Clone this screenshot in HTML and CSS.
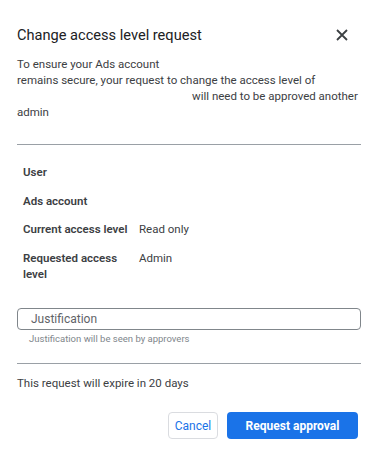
FILE: index.html
```html
<!DOCTYPE html>
<html>
<head>
<meta charset="utf-8">
<link rel="stylesheet" href="styles.css">
</head>
<body>
<div class="dialog">
  <div class="header">
    <h1 class="title">Change access level request</h1>
    <button class="close" aria-label="Close">
      <svg width="12" height="12" viewBox="0 0 12 12"><path d="M1 1L11 11M11 1L1 11" stroke="#3c4043" stroke-width="1.8" fill="none"/></svg>
    </button>
  </div>
  <p class="intro">To ensure your Ads account<br>remains secure, your request to change the access level of<br><span class="blank"></span>will need to be approved another<br>admin</p>
  <hr class="divider">
  <div class="details">
    <div class="row"><div class="label">User</div><div class="value"></div></div>
    <div class="row"><div class="label">Ads account</div><div class="value"></div></div>
    <div class="row"><div class="label">Current access level</div><div class="value">Read only</div></div>
    <div class="row"><div class="label">Requested access level</div><div class="value">Admin</div></div>
  </div>
  <div class="field">
    <div class="input">Justification</div>
    <div class="helper">Justification will be seen by approvers</div>
  </div>
  <hr class="divider divider-2">
  <p class="expire">This request will expire in 20 days</p>
  <div class="actions">
    <button class="btn btn-cancel">Cancel</button>
    <button class="btn btn-primary">Request approval</button>
  </div>
</div>
</body>
</html>
```
FILE: styles.css
```css
html, body {
  margin: 0;
  padding: 0;
  background: #fff;
}
.dialog {
  font-family: Roboto, "Liberation Sans", sans-serif;
  color: #3c4043;
  padding: 26px 17px 0 17px;
}
.header {
  display: flex;
  align-items: center;
  justify-content: space-between;
  height: 18px;
}
.title {
  margin: 0;
  font-size: 14.6px;
  font-weight: 400;
  color: #202124;
  line-height: 18px;
}
.close {
  border: 0;
  background: none;
  padding: 0;
  margin-right: 13px;
  width: 12px;
  height: 12px;
  display: flex;
}
.intro {
  margin: 12px 0 0 0;
  font-size: 11.5px;
  line-height: 16px;
  color: #3c4043;
}
.blank {
  display: inline-block;
  width: 175px;
}
.divider {
  border: 0;
  border-top: 1px solid #9aa0a6;
  margin: 24px 0 0 0;
}
.details {
  padding: 15px 6px 0 6px;
  font-size: 11.5px;
}
.row {
  display: flex;
  padding: 4px 0 8.5px 0;
  line-height: 16px;
}
.label {
  width: 116px;
  font-weight: 600;
  color: #3c4043;
}
.value {
  color: #3c4043;
}
.field {
  margin-top: 18px;
}
.input {
  height: 20px;
  border: 1px solid #80868b;
  border-radius: 4px;
  padding-left: 13px;
  font-size: 12px;
  line-height: 20px;
  color: #5f6368;
}
.helper {
  margin-top: 2px;
  padding-left: 12px;
  font-size: 9.5px;
  line-height: 13px;
  color: #80868b;
}
.divider-2 {
  margin-top: 18px;
}
.expire {
  margin: 11px 0 0 0;
  font-size: 11.5px;
  line-height: 16px;
}
.actions {
  display: flex;
  justify-content: flex-end;
  gap: 9px;
  margin-top: 21px;
  padding-right: 3px;
}
.btn {
  font-family: Roboto, "Liberation Sans", sans-serif;
  font-size: 12px;
  font-weight: 500;
  height: 27px;
  border-radius: 4px;
  padding: 0;
}
.btn-cancel {
  width: 50px;
  background: #fff;
  border: 1px solid #dadce0;
  color: #1a73e8;
  font-weight: 400;
}
.btn-primary {
  width: 131px;
  background: #1a73e8;
  border: 0;
  color: #fff;
  font-weight: 700;
}
```
